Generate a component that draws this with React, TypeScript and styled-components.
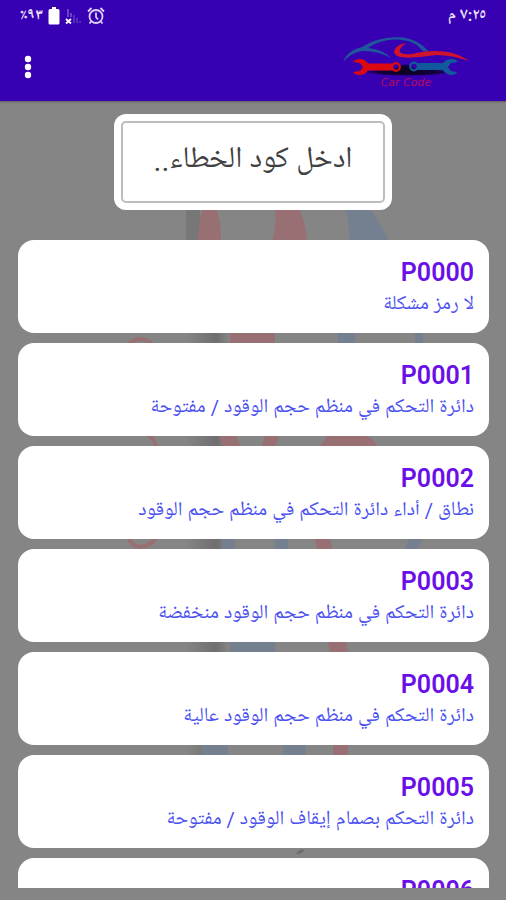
import React from "react";
import styled, { createGlobalStyle } from "styled-components";

const GlobalStyle = createGlobalStyle`
  *, *::before, *::after { box-sizing: border-box; }
  body {
    margin: 0;
    background: #858585;
    font-family: Roboto, "Noto Naskh Arabic UI", "Noto Sans Arabic", "DejaVu Sans", sans-serif;
  }
`;

const Screen = styled.div`
  position: relative;
  isolation: isolate;
  display: flex;
  flex-direction: column;
  height: 100vh;
  padding-bottom: 12px;
  overflow: hidden;
  background: #858585;
`;

const Header = styled.header`
  flex: none;
  background: #3700b3;
  color: #fff;
  box-shadow: 0 1px 2px rgba(0, 0, 0, 0.3);
`;

const StatusBar = styled.div`
  display: flex;
  align-items: center;
  justify-content: space-between;
  height: 32px;
  padding: 0 20px;
  font-size: 16px;
  line-height: 24px;
  font-weight: 700;
  color: #e6defa;
`;

const StatusGroup = styled.div`
  display: flex;
  align-items: center;
  gap: 5px;
`;

const Toolbar = styled.div`
  display: flex;
  align-items: center;
  justify-content: space-between;
  height: 69px;
  padding: 0 36px 0 16px;
`;

const MenuButton = styled.button`
  display: grid;
  place-items: center;
  width: 24px;
  height: 40px;
  padding: 0;
  border: 0;
  background: none;
  cursor: pointer;
`;

const Brand = styled.div`
  display: flex;
  flex-direction: column;
  align-items: center;
  padding-bottom: 8px;
`;

const BrandName = styled.span`
  font: italic 11px/10px "DejaVu Sans", sans-serif;
  color: #b80c5c;
`;

const Watermark = styled.svg`
  position: absolute;
  z-index: -1;
  top: 180px;
  left: 50%;
  width: 340px;
  height: 680px;
  transform: translateX(-50%);
`;

const SearchBox = styled.label`
  flex: none;
  align-self: center;
  width: 55%;
  margin-top: 13px;
  padding: 7px;
  border-radius: 12px;
  background: #fff;
`;

const SearchInput = styled.input`
  display: block;
  width: 100%;
  height: 82px;
  padding: 0 8px 4px;
  border: 2px solid #bdbdbd;
  border-radius: 5px;
  background: #fff;
  color: #404040;
  font-family: inherit;
  font-size: 30px;
  text-align: center;
  &::placeholder { color: #404040; opacity: 1; }
`;

const CodeList = styled.ul`
  flex: 1;
  min-height: 0;
  display: flex;
  flex-direction: column;
  gap: 10px;
  margin: 30px 17px 0 18px;
  padding: 0;
  overflow: hidden;
  list-style: none;
`;

const CodeCard = styled.li`
  flex: none;
  height: 93px;
  padding: 18px 15px 0;
  border-radius: 16px;
  background: #fff;
`;

const Code = styled.h2`
  margin: 0;
  font-size: 25px;
  line-height: 30px;
  font-weight: 600;
  color: #6a0fe8;
`;

const Meaning = styled.p`
  margin: 4px 0 0;
  font-size: 20px;
  line-height: 26px;
  color: #4a50f0;
`;

const codes = [
  { code: "P0000", meaning: "لا رمز مشكلة" },
  { code: "P0001", meaning: "دائرة التحكم في منظم حجم الوقود / مفتوحة" },
  { code: "P0002", meaning: "نطاق / أداء دائرة التحكم في منظم حجم الوقود" },
  { code: "P0003", meaning: "دائرة التحكم في منظم حجم الوقود منخفضة" },
  { code: "P0004", meaning: "دائرة التحكم في منظم حجم الوقود عالية" },
  { code: "P0005", meaning: "دائرة التحكم بصمام إيقاف الوقود / مفتوحة" },
  { code: "P0006", meaning: "" },
];

const BatteryIcon = () => (
  <svg width="12" height="18" viewBox="0 0 12 18" fill="#fff" aria-hidden="true">
    <path d="M4 0h4v2h2q1.500 0 1.500 1.500v12.500q0 1.500-1.500 1.500H2Q.5 17.500.5 16V3.500Q.5 2 2 2h2z" />
  </svg>
);

const SignalIcon = () => (
  <svg width="17" height="17" viewBox="0 0 17 17" aria-hidden="true">
    <path d="M3 1v8M6 5v4" stroke="#7a58cf" strokeWidth="1.500" />
    <path d="M9 7v8M12 10v5M15 13v2" stroke="#5a30c0" strokeWidth="1.800" />
    <path d="M1 11l5 4.500M6 11l-5 4.500" stroke="#fff" strokeWidth="1.800" />
  </svg>
);

const AlarmIcon = () => (
  <svg width="18" height="18" viewBox="0 0 18 18" fill="none" stroke="#dcd2f8" strokeWidth="1.800" aria-hidden="true">
    <circle cx="9" cy="9.500" r="6.500" />
    <path d="M1 4.500L4.500 1M17 4.500L13.500 1M9 5.500v4.500l2 2.500M4 14.500L2.500 16.500M14 14.500l1.500 2" />
  </svg>
);

const MenuIcon = () => (
  <svg width="8" height="24" viewBox="0 0 8 24" fill="#fff" aria-hidden="true">
    <circle cx="4" cy="4" r="3.200" />
    <circle cx="4" cy="12" r="3.200" />
    <circle cx="4" cy="20" r="3.200" />
  </svg>
);

const CarLogo = () => (
  <svg width="128" height="41" viewBox="0 0 128 41" role="img" aria-label="Car Code">
    <defs>
      <radialGradient id="ground">
        <stop offset="0" stopColor="#0a0020" />
        <stop offset=".7" stopColor="#0a0020" stopOpacity=".8" />
        <stop offset="1" stopColor="#0a0020" stopOpacity="0" />
      </radialGradient>
    </defs>
    <ellipse cx="66" cy="35" rx="44" ry="4" fill="url(#ground)" />
    <ellipse cx="63" cy="32" rx="10" ry="5" fill="url(#ground)" />
    <path d="M1 25C4 17 11 12 20 10C34 0 62-4 77 6Q83 10 87 15L81 14Q74 6 66 4C50 0 36 4 26 11Q40 12 49 21Q34 13 20 14Q7 17 1 25z" fill="#1f579c" />
    <path d="M64 6Q56 12 58 15Q61 18 70 17C90 12 112 13 127 24Q110 18 95 18C78 20 54 24 52 15Q53 8 64 6z" fill="#d0142c" />
    <path d="M26 26.500H50.500V33.500H26Q23 38 17 38Q13 38 11 35L18 34L21 30L18 26L11 25Q13 22 18 22Q23 22 26 26.500z" fill="#dc0a10" />
    <circle cx="54" cy="30" r="3.800" fill="none" stroke="#dc0a10" strokeWidth="2.200" />
    <path d="M101 26H76V33H101Q104 38 110 38Q114 38 115 35L109 34L106 30L109 26L116 25Q114 22 110 22Q104 22 101 26z" fill="#105a9c" />
    <circle cx="72" cy="29.500" r="3.800" fill="none" stroke="#105a9c" strokeWidth="2.200" />
  </svg>
);

const BackgroundLogo = () => (
  <Watermark viewBox="0 0 340 680" aria-hidden="true">
    <defs>
      <linearGradient id="shade" x1="0" x2="1" y1="0" y2="0">
        <stop offset="0" stopColor="#606060" stopOpacity="0" />
        <stop offset=".7" stopColor="#606060" stopOpacity=".6" />
        <stop offset="1" stopColor="#606060" stopOpacity="0" />
      </linearGradient>
    </defs>
    <path d="M103 70h43v510h-43z" fill="url(#shade)" />
    <path d="M103 25h14v40h-14z" fill="#777" />
    <g fill="#986f72">
      <path d="M120 28h13q5 12 5 34h-23q0-20 5-34zM192 28h24q7 14 8 34h-35q5-16 3-34zM147 153h45v12h-45zM135 254h17l6 12h-18zM182 254h15l-5 12h-13zM246 254h34q12 5 14 12h-57zM232 358h15l2 11h-15zM245 461h18l2 12h-18zM250 564h15v12h-15z" />
    </g>
    <g fill="#748090">
      <path d="M262 28h24q13 16 20 34h-40q1-18-4-34zM255 153h17v12h-17zM332 153h14v12h-14zM347 254h10l4 12h-12zM139 358h13v11h-13zM192 358h13v11h-13zM322 369l4-11h14l-6 11zM147 461h45v12h-45zM119 564h26v12h-26zM200 564h23v12h-23z" />
    </g>
    <g fill="none" stroke="#986f72" strokeWidth="4">
      <path d="M44 166q13-14 27 0M63 254q8 2 10 14M45 355q2 11 12 12q14-2 17-12" />
    </g>
    <path d="M213 674q4-6 8-4q-1 4-8 4z" fill="#706c6c" />
  </Watermark>
);

export default function App() {
  return (
    <>
      <GlobalStyle />
      <Screen>
        <BackgroundLogo />
        <Header>
          <StatusBar>
            <StatusGroup>
              <span dir="rtl">٩٣٪</span>
              <BatteryIcon />
              <SignalIcon />
              <AlarmIcon />
            </StatusGroup>
            <span dir="rtl">٧:٢٥ م</span>
          </StatusBar>
          <Toolbar>
            <MenuButton type="button" aria-label="القائمة">
              <MenuIcon />
            </MenuButton>
            <Brand>
              <CarLogo />
              <BrandName>Car Code</BrandName>
            </Brand>
          </Toolbar>
        </Header>
        <SearchBox>
          <SearchInput type="text" dir="rtl" aria-label="ادخل كود الخطاء" placeholder="ادخل كود الخطاء.." />
        </SearchBox>
        <CodeList dir="rtl">
          {codes.map(({ code, meaning }) => (
            <CodeCard key={code}>
              <Code>{code}</Code>
              {meaning && <Meaning>{meaning}</Meaning>}
            </CodeCard>
          ))}
        </CodeList>
      </Screen>
    </>
  );
}
